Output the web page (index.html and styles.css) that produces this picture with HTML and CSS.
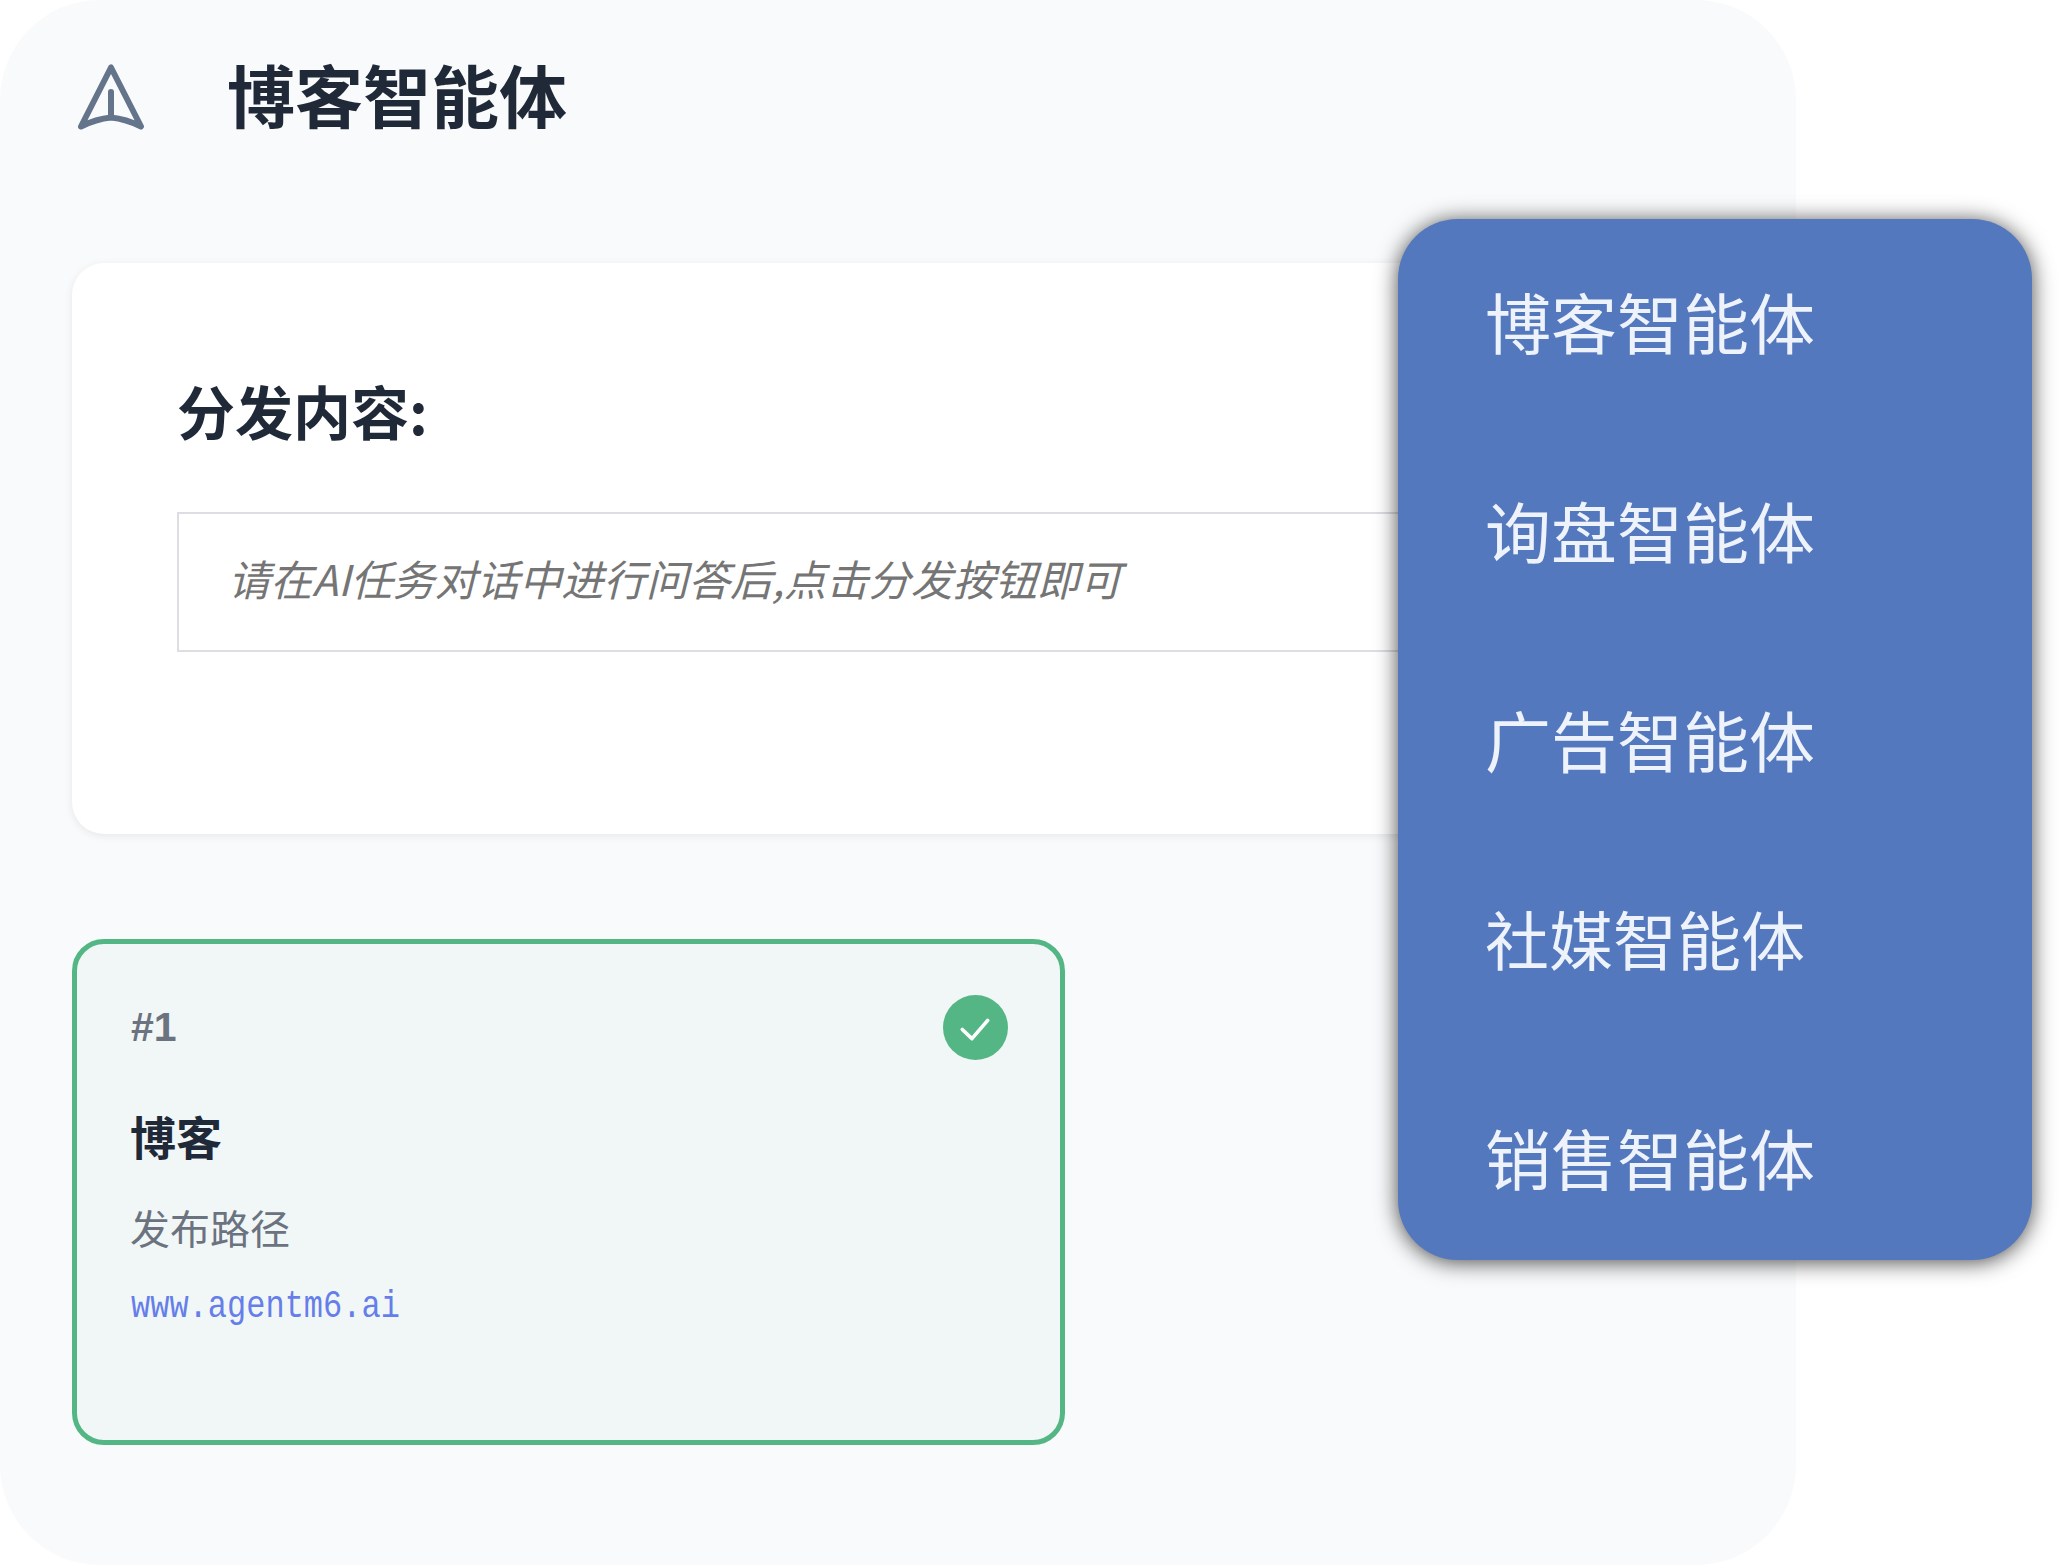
FILE: index.html
```html
<!DOCTYPE html>
<html lang="zh-CN">
<head>
<meta charset="utf-8">
<title>博客智能体</title>
<link rel="stylesheet" href="styles.css">
</head>
<body>
<main class="panel">
  <header class="header">
    <svg class="header-icon" viewBox="0 0 66 66" fill="none" stroke="#64748b" stroke-width="6" stroke-linecap="round" stroke-linejoin="round">
      <path d="M33 3.5 L3 62.5 Q18 55 33 53.5 Q48 55 63 62.5 Z"/>
      <path d="M33 28 V53"/>
    </svg>
    <h1 class="title">博客智能体</h1>
  </header>

  <section class="content-card">
    <h2 class="content-label">分发内容:</h2>
    <div class="content-input">请在AI任务对话中进行问答后,点击分发按钮即可</div>
  </section>

  <article class="channel-card">
    <div class="channel-head">
      <span class="channel-num">#1</span>
      <span class="channel-check">
        <svg viewBox="0 0 64 64" fill="none" stroke="#fff" stroke-width="3.6" stroke-linecap="round" stroke-linejoin="round"><path d="M19 34 L28.5 43 L44 25"/></svg>
      </span>
    </div>
    <h3 class="channel-name">博客</h3>
    <p class="channel-desc">发布路径</p>
    <p class="channel-url">www.agentm6.ai</p>
  </article>
</main>

<nav class="menu">
  <a class="menu-item">博客智能体</a>
  <a class="menu-item">询盘智能体</a>
  <a class="menu-item">广告智能体</a>
  <a class="menu-item menu-item-tight">社媒智能体</a>
  <a class="menu-item menu-item-loose">销售智能体</a>
</nav>
</body>
</html>
```

FILE: styles.css
```css
* { box-sizing: border-box; }

html, body {
  margin: 0;
  background: #fff;
}

body {
  position: relative;
  width: 2063px;
  height: 1565px;
  overflow: hidden;
  font-family: "Noto Sans CJK SC", "Liberation Sans", sans-serif;
}

.panel {
  width: 1796px;
  height: 1565px;
  padding: 54px 72px 0;
  background: #f9fafb;
  border-radius: 100px;
}

.header {
  display: flex;
  align-items: center;
  gap: 83px;
  height: 80px;
  margin-left: 6px;
}

.header-icon {
  width: 66px;
  height: 66px;
  flex: none;
  margin-top: 6px;
}

.title {
  margin: 0;
  font-size: 68px;
  line-height: 80px;
  font-weight: 700;
  color: #1f2937;
}

.content-card {
  height: 571px;
  margin-top: 129px;
  padding: 112px 105px 0;
  background: #fff;
  border-radius: 32px;
  box-shadow: 0 2px 8px rgba(0, 0, 0, 0.08);
}

.content-label {
  margin: 0;
  font-size: 58px;
  line-height: 70px;
  font-weight: 700;
  color: #1f2937;
}

.content-input {
  height: 140px;
  margin-top: 67px;
  padding: 0 49px;
  border: 2px solid #dcdee3;
  font-size: 42.2px;
  line-height: 128px;
  font-style: italic;
  color: #757575;
}

.channel-card {
  width: 993px;
  height: 506px;
  margin-top: 105px;
  padding: 51px 52px 52px 53px;
  background: #f1f7f6;
  border: 5px solid #55b685;
  border-radius: 32px;
}

.channel-head {
  display: flex;
  align-items: center;
  justify-content: space-between;
  height: 64px;
}

.channel-num {
  margin-left: 1px;
  font-size: 41px;
  font-weight: 700;
  color: #6b7280;
  font-family: "Liberation Sans", "Noto Sans CJK SC", sans-serif;
}

.channel-check {
  display: block;
  width: 65px;
  height: 65px;
  border-radius: 50%;
  background: #55b685;
}

.channel-check svg {
  display: block;
  width: 65px;
  height: 65px;
}

.channel-name {
  margin: 46px 0 0;
  font-size: 46px;
  line-height: 60px;
  font-weight: 700;
  color: #1f2937;
}

.channel-desc {
  margin: 37px 0 0;
  font-size: 40px;
  line-height: 50px;
  color: #6b7280;
}

.channel-url {
  margin: 30px 0 0 1px;
  font-family: "Liberation Mono", monospace;
  font-size: 32px;
  line-height: 50px;
  color: #667eea;
  transform: scaleY(1.22);
  transform-origin: left center;
}

.menu {
  position: absolute;
  top: 219px;
  left: 1398px;
  display: flex;
  flex-direction: column;
  gap: 119px;
  width: 634px;
  height: 1041px;
  padding: 56px 0 0 87px;
  background: #5378bd;
  border-radius: 60px;
  box-shadow: 0 2px 22px rgba(0, 0, 0, 0.72);
}

.menu-item {
  font-size: 66px;
  line-height: 90px;
  color: #eef2fa;
}

.menu-item-tight {
  margin-top: -10px;
  font-size: 64px;
}

.menu-item-loose {
  margin-top: 10px;
}
```
